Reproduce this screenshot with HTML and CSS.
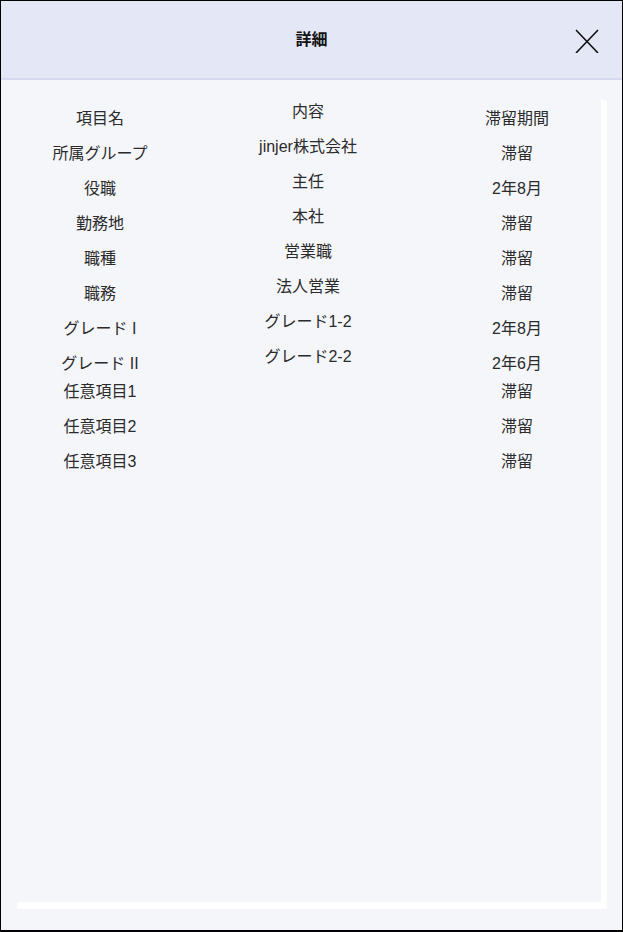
FILE: index.html
```html
<!DOCTYPE html>
<html lang="ja">
<head>
  <meta charset="UTF-8">
  <meta name="viewport" content="width=device-width, initial-scale=1.0">
  <title>詳細</title>
  <link rel="stylesheet" href="styles.css">
</head>
<body>
  <div class="modal">
    <div class="modal-header">
      <span></span>
      <h1 class="modal-title">詳細</h1>
      <button class="close-btn" type="button" aria-label="閉じる">
        <svg width="24" height="24" viewBox="0 0 24 24">
          <path d="M1 1 L23 24 M23 1 L1 24" stroke="#111" stroke-width="1.6" fill="none"/>
        </svg>
      </button>
    </div>

    <div class="modal-body">
      <div class="panel">
        <ul class="col col-name">
          <li>項目名</li>
          <li>所属グループ</li>
          <li>役職</li>
          <li>勤務地</li>
          <li>職種</li>
          <li>職務</li>
          <li>グレード I</li>
          <li>グレード II</li>
          <li class="extra">任意項目1</li>
          <li>任意項目2</li>
          <li>任意項目3</li>
        </ul>
        <ul class="col col-value">
          <li>内容</li>
          <li>jinjer株式会社</li>
          <li>主任</li>
          <li>本社</li>
          <li>営業職</li>
          <li>法人営業</li>
          <li>グレード1-2</li>
          <li>グレード2-2</li>
        </ul>
        <ul class="col col-term">
          <li>滞留期間</li>
          <li>滞留</li>
          <li>2年8月</li>
          <li>滞留</li>
          <li>滞留</li>
          <li>滞留</li>
          <li>2年8月</li>
          <li>2年6月</li>
          <li class="extra">滞留</li>
          <li>滞留</li>
          <li>滞留</li>
        </ul>
      </div>
    </div>
  </div>
</body>
</html>
```

FILE: styles.css
```css
html, body {
  margin: 0;
  padding: 0;
}
body {
  font-family: "Liberation Sans", "Noto Sans CJK JP", sans-serif;
  color: #2b2b2b;
  background-color: #f5f6fa;
}
.modal {
  box-sizing: border-box;
  width: 623px;
  height: 932px;
  border: 1px solid #000;
  border-bottom-width: 2px;
  background-color: #f5f6fa;
  display: flex;
  flex-direction: column;
}
.modal-header {
  height: 77px;
  flex: none;
  background-color: #e4e7f6;
  border-bottom: 2px solid #d6d9f1;
  display: grid;
  grid-template-columns: 1fr auto 1fr;
  align-items: center;
}
.modal-title {
  margin: 0 0 3px;
  font-size: 16px;
  font-weight: bold;
  color: #111;
}
.close-btn {
  justify-self: end;
  margin-right: 23px;
  margin-top: 3px;
  padding: 0;
  border: none;
  background: none;
  width: 24px;
  height: 24px;
  cursor: pointer;
}
.close-btn svg {
  display: block;
}
.modal-body {
  flex: 1;
  padding: 20px 15px 21px 16px;
  display: flex;
}
.panel {
  flex: 1;
  display: grid;
  grid-template-columns: 166px 250px 1fr;
  align-items: start;
  border-right: 6px solid #fff;
  border-bottom: 7px solid #fff;
  border-top-right-radius: 4px;
}
.col {
  list-style: none;
  margin: 0;
  padding: 1px 0 0;
  text-align: center;
  font-size: 16px;
}
.col li {
  line-height: 35px;
  height: 35px;
}
.col-value {
  margin-top: -7px;
}
.col .extra {
  margin-top: -7px;
}
```
